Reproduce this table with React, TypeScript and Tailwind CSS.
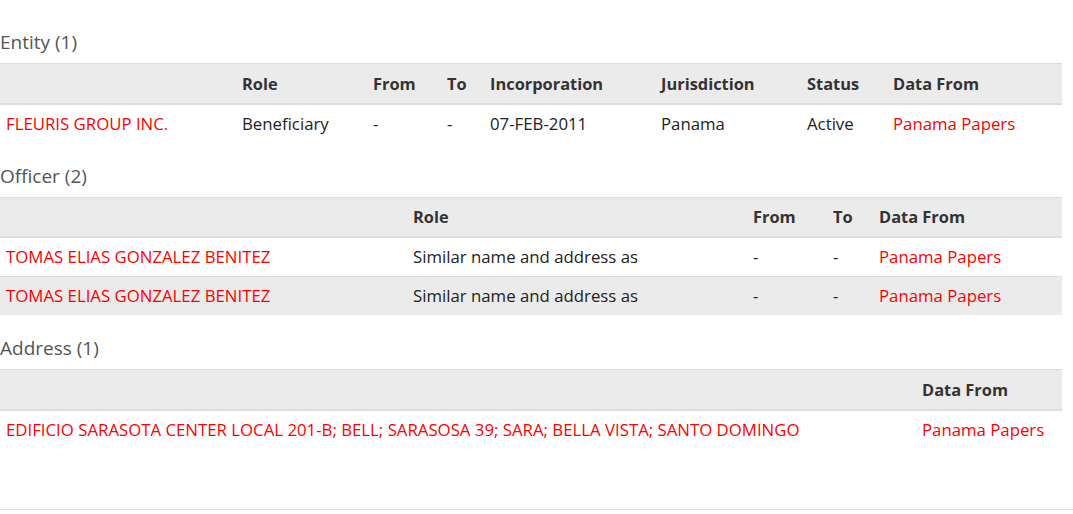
import React from 'react';

interface Column {
  label: string;
  width: number;
}

interface Section {
  title: string;
  columns: Column[];
  rows: string[][];
  links: number[];
}

const sections: Section[] = [
  {
    title: 'Entity (1)',
    columns: [
      { label: '', width: 236 },
      { label: 'Role', width: 131 },
      { label: 'From', width: 74 },
      { label: 'To', width: 43 },
      { label: 'Incorporation', width: 171 },
      { label: 'Jurisdiction', width: 146 },
      { label: 'Status', width: 86 },
      { label: 'Data From', width: 175 },
    ],
    rows: [['FLEURIS GROUP INC.', 'Beneficiary', '-', '-', '07-FEB-2011', 'Panama', 'Active', 'Panama Papers']],
    links: [0, 7],
  },
  {
    title: 'Officer (2)',
    columns: [
      { label: '', width: 407 },
      { label: 'Role', width: 340 },
      { label: 'From', width: 80 },
      { label: 'To', width: 46 },
      { label: 'Data From', width: 189 },
    ],
    rows: [
      ['TOMAS ELIAS GONZALEZ BENITEZ', 'Similar name and address as', '-', '-', 'Panama Papers'],
      ['TOMAS ELIAS GONZALEZ BENITEZ', 'Similar name and address as', '-', '-', 'Panama Papers'],
    ],
    links: [0, 4],
  },
  {
    title: 'Address (1)',
    columns: [
      { label: '', width: 916 },
      { label: 'Data From', width: 146 },
    ],
    rows: [['EDIFICIO SARASOTA CENTER LOCAL 201-B; BELL; SARASOSA 39; SARA; BELLA VISTA; SANTO DOMINGO', 'Panama Papers']],
    links: [0, 1],
  },
];

function ResultTable({ section }: { section: Section }) {
  return (
    <div className="mt-5">
      <h3 className="mb-2 h-[26px] text-[19px] leading-[26px] text-[#555]">{section.title}</h3>
      <table className="w-[1062px] table-fixed border-collapse text-[16.8px]">
        <colgroup>
          {section.columns.map((col, i) => (
            <col key={i} style={{ width: col.width }} />
          ))}
        </colgroup>
        <thead>
          <tr className="bg-[#ebebeb]">
            {section.columns.map((col, i) => (
              <th
                key={i}
                className="h-[40px] border-t border-b-2 border-[#dddddd] px-1.5 pt-0.5 text-left text-[16.4px] font-bold text-[#333]"
              >
                {col.label}
              </th>
            ))}
          </tr>
        </thead>
        <tbody>
          {section.rows.map((row, r) => (
            <tr key={r} className={r % 2 === 1 ? 'bg-[#ebebeb]' : 'bg-white'}>
              {row.map((cell, c) => (
                <td
                  key={c}
                  className={`h-[39px] whitespace-nowrap border-t border-[#dddddd] px-1.5 ${
                    section.links.includes(c) ? 'text-[#ff0000]' : 'text-[#222]'
                  } ${r === 0 ? 'border-t-0' : ''}`}
                >
                  {cell}
                </td>
              ))}
            </tr>
          ))}
        </tbody>
      </table>
    </div>
  );
}

export default function App() {
  return (
    <div className="w-[1073px] bg-white font-['Open_Sans','Noto_Sans',sans-serif]">
      <div className="h-[509px] pt-[9px]">
        {sections.map(section => (
          <ResultTable key={section.title} section={section} />
        ))}
      </div>
      <div className="h-[5px] border-t border-[#e5e5e5]" />
    </div>
  );
}
